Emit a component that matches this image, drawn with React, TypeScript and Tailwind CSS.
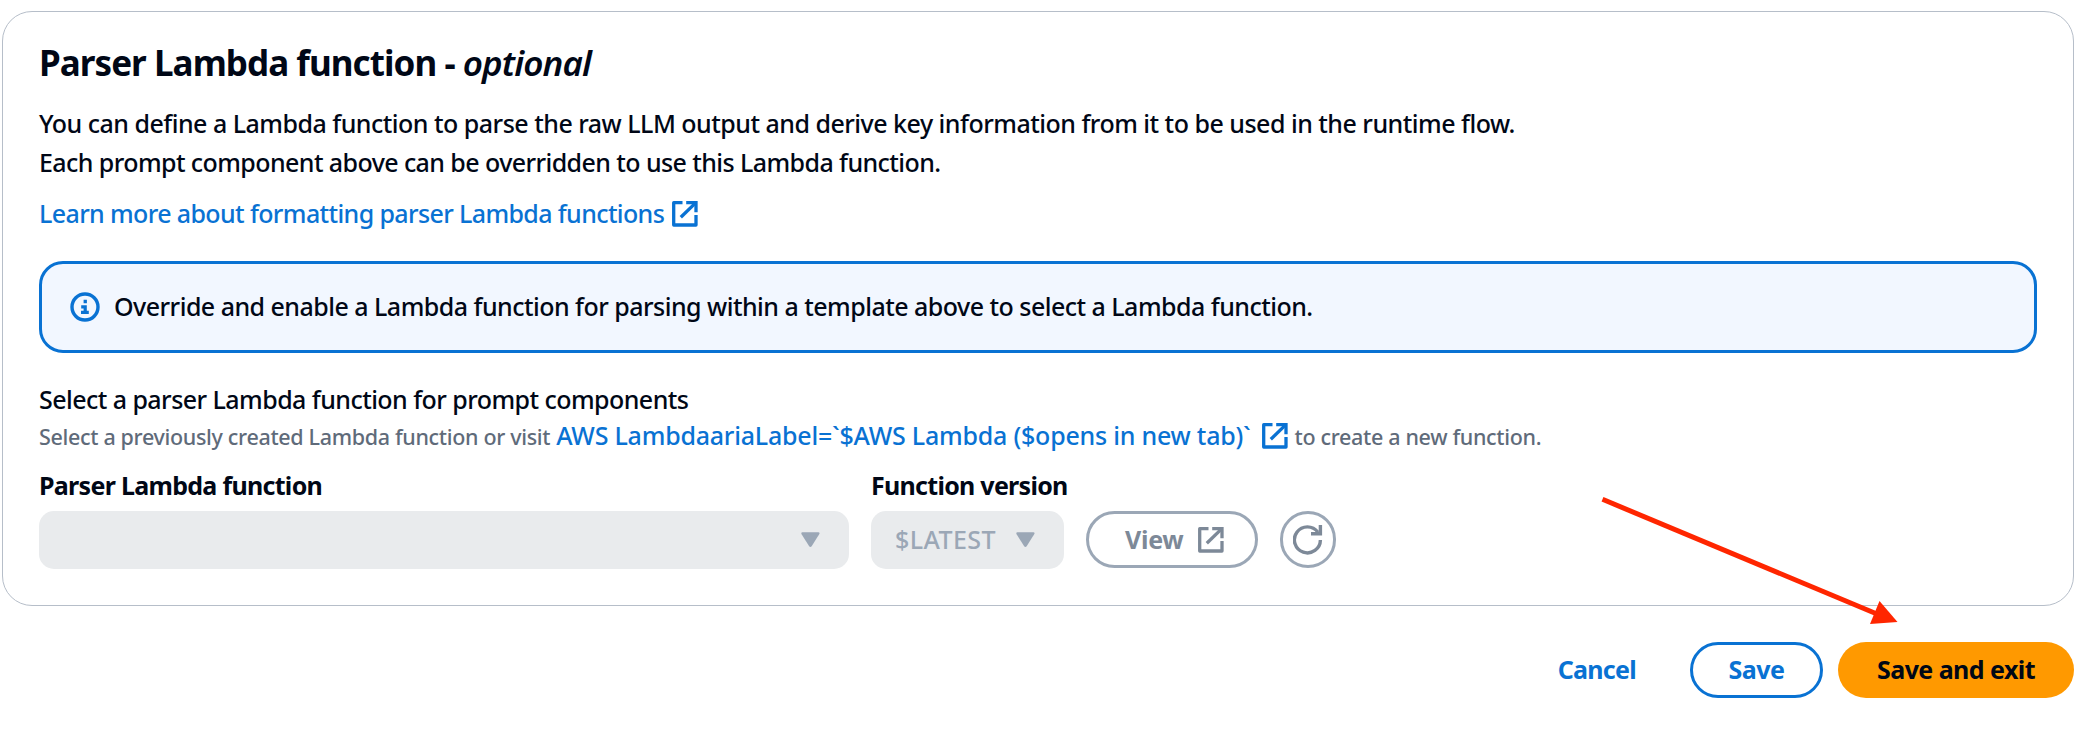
function ExternalIcon({ className = "" }: { className?: string }) {
  return (
    <svg className={`h-[26px] w-[26px] shrink-0 ${className}`} viewBox="0 0 26 26" fill="none" stroke="currentColor" strokeWidth="3.3">
      <path d="M10.5 1.7H1.7V24H24V14" strokeLinejoin="round" />
      <path d="M14.2 1.7H24V11.2" />
      <path d="M8.8 16.3L23.6 1.9" />
    </svg>
  );
}

function RefreshIcon() {
  return (
    <svg className="h-[30px] w-[30px]" viewBox="0 0 30 30" fill="none" stroke="currentColor" strokeWidth="3.4">
      <path d="M27.4 15A13 13 0 1 1 24.9 7.2" />
      <path d="M18 8.7H27.4V0" />
    </svg>
  );
}

function InfoIcon() {
  return (
    <svg className="h-[30px] w-[30px] shrink-0" viewBox="0 0 30 30" fill="none">
      <circle cx="15" cy="15" r="13" stroke="currentColor" strokeWidth="3.4" />
      <path d="M13.6 7.8h3.3v3.4h-3.3zM11.2 13.2h5.6v5.6h2v3.3H11v-3.3h2.6v-2.4h-2.4z" fill="currentColor" />
    </svg>
  );
}

function Caret() {
  return (
    <svg className="h-[16px] w-[19px] shrink-0" viewBox="0 0 19 16" fill="currentColor">
      <path d="M1.4 0.3H17.4Q19.2 0.5 18.2 2.2L10.8 14.1Q9.4 15.8 8 14.1L0.6 2.2Q-0.3 0.5 1.4 0.3Z" />
    </svg>
  );
}

export default function App() {
  return (
    <div className="relative h-[740px] w-[2100px] overflow-hidden bg-white pl-[2px] pt-[11px] font-['Noto_Sans','Open_Sans',sans-serif] text-[25px] font-medium whitespace-nowrap text-[#000716]">
      <section className="h-[595px] w-[2072px] rounded-[30px] border border-[#b6bec9] pt-[29px] pr-[36px] pl-[36px]">
        <h2 className="text-[35px] leading-[44px] font-bold tracking-[-0.94px]">
          Parser Lambda function - <em className="font-semibold tracking-[-0.9px]">optional</em>
        </h2>
        <p className="mt-[19px] leading-[39px] tracking-[-0.51px]">
          You can define a Lambda function to parse the raw LLM output and derive key information from it to be used in the runtime flow.
          <br />
          <span className="tracking-[-0.58px]">Each prompt component above can be overridden to use this Lambda function.</span>
        </p>
        <a className="mt-[12px] flex h-[39px] leading-[39px] tracking-[-0.62px] text-[#0972d3]">
          Learn more about formatting parser Lambda functions
          <ExternalIcon className="mt-[7px] ml-[8px]" />
        </a>

        <div className="mt-[28px] flex h-[92px] items-center rounded-[24px] border-3 border-[#0972d3] bg-[#f2f7ff] pl-[28px]">
          <span className="text-[#0972d3]">
            <InfoIcon />
          </span>
          <span className="ml-[14px] tracking-[-0.525px]">
            Override and enable a Lambda function for parsing within a template above to select a Lambda function.
          </span>
        </div>

        <div className="mt-[27px] leading-[38px] tracking-[-0.55px]">Select a parser Lambda function for prompt components</div>
        <div className="flex h-[34px] items-baseline text-[21.5px] leading-[34px] tracking-[-0.33px] text-[#5f6b7a]">
          Select a previously created Lambda function or visit
          <a className="ml-[6px] flex text-[25px] tracking-[-0.22px] text-[#0972d3]">
            AWS LambdaariaLabel=`$AWS Lambda ($opens in new tab)`
            <ExternalIcon className="mt-[5px] mr-[7px] ml-[11px]" />
          </a>
          to create a new function.
        </div>

        <div className="mt-[14px] flex items-end gap-[22px]">
          <div className="w-[810px]">
            <div className="mb-[7px] leading-[38px] font-bold tracking-[-0.7px]">Parser Lambda function</div>
            <div className="flex h-[58px] items-center justify-end rounded-[15px] bg-[#e9ebed] pr-[29px] text-[#9ba7b6]">
              <Caret />
            </div>
          </div>
          <div className="w-[193px]">
            <div className="mb-[7px] leading-[38px] font-bold tracking-[-0.72px]">Function version</div>
            <div className="flex h-[58px] items-center justify-between rounded-[15px] bg-[#e9ebed] pr-[29px] pl-[24px] tracking-[0.4px] text-[#9ba7b6]">
              $LATEST
              <Caret />
            </div>
          </div>
          <button className="mb-px flex h-[57px] w-[172px] items-center rounded-full border-3 border-[#9ba7b6] pl-[36px] font-bold tracking-[-0.3px] text-[#7d8998]">
            View
            <ExternalIcon className="ml-[15px]" />
          </button>
          <button className="mb-px flex h-[57px] w-[56px] items-center justify-center rounded-full border-3 border-[#9ba7b6] text-[#7d8998]">
            <RefreshIcon />
          </button>
        </div>
      </section>

      <footer className="mt-[36px] flex w-[2072px] items-center justify-end font-bold">
        <button className="mr-[54px] tracking-[-0.7px] text-[#0972d3]">Cancel</button>
        <button className="mr-[15px] h-[56px] w-[133px] rounded-full border-3 border-[#0972d3] tracking-[-0.5px] text-[#0972d3]">Save</button>
        <button className="h-[56px] w-[236px] rounded-full bg-[#ff9900] tracking-[-0.55px]">Save and exit</button>
      </footer>

      <svg className="absolute top-[490px] left-[1590px] h-[140px] w-[320px]" viewBox="1590 490 320 140">
        <path d="M1602.5 499.3L1877 614" stroke="#ff2600" strokeWidth="5" />
        <path d="M1897.5 622L1879.5 601L1870 624Z" fill="#ff2600" />
      </svg>
    </div>
  );
}
